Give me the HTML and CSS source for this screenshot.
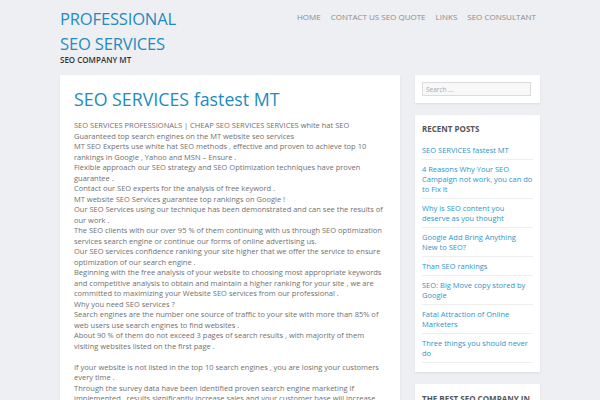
FILE: index.html
```html
<!DOCTYPE html>
<html>
<head>
<meta charset="utf-8">
<link rel="stylesheet" href="styles.css">
</head>
<body>
<div class="wrap">
  <header class="site-header">
    <div class="branding">
      <div class="site-title">PROFESSIONAL<br>SEO SERVICES</div>
      <div class="site-desc">SEO COMPANY MT</div>
    </div>
    <nav class="menu">
      <a>HOME</a>
      <a>CONTACT US SEO QUOTE</a>
      <a>LINKS</a>
      <a>SEO CONSULTANT</a>
    </nav>
  </header>
  <div class="layout">
    <main class="card post">
      <h1 class="post-title">SEO SERVICES fastest MT</h1>
      <div class="post-body">
        <p>SEO SERVICES PROFESSIONALS | CHEAP SEO SERVICES SERVICES white hat SEO Guaranteed top search engines on the MT website seo services<br>
        MT SEO Experts use white hat SEO methods , effective and proven to achieve top 10 rankings in Google , Yahoo and MSN – Ensure .<br>
        Flexible approach our SEO strategy and SEO Optimization techniques have proven guarantee .<br>
        Contact our SEO experts for the analysis of free keyword .<br>
        MT website SEO Services guarantee top rankings on Google !<br>
        Our SEO Services using our technique has been demonstrated and can see the results of our work .<br>
        The SEO clients with our over 95 % of them continuing with us through SEO optimization services search engine or continue our forms of online advertising us.<br>
        Our SEO services confidence ranking your site higher that we offer the service to ensure optimization of our search engine .<br>
        Beginning with the free analysis of your website to choosing most appropriate keywords and competitive analysis to obtain and maintain a higher ranking for your site , we are committed to maximizing your Website SEO services from our professional .<br>
        Why you need SEO services ?<br>
        Search engines are the number one source of traffic to your site with more than 85% of web users use search engines to find websites .<br>
        About 90 % of them do not exceed 3 pages of search results , with majority of them visiting websites listed on the first page .</p>
        <p>If your website is not listed in the top 10 search engines , you are losing your customers every time .<br>
        Through the survey data have been identified proven search engine marketing if implemented , results significantly increase sales and your customer base will increase</p>
      </div>
    </main>
    <aside class="sidebar">
      <div class="card widget search-widget">
        <input class="search" type="text" placeholder="Search ...">
      </div>
      <div class="card widget">
        <h3 class="widget-title">RECENT POSTS</h3>
        <ul class="recent">
          <li><a>SEO SERVICES fastest MT</a></li>
          <li><a>4 Reasons Why Your SEO Campaign not work, you can do to Fix It</a></li>
          <li><a>Why is SEO content you deserve as you thought</a></li>
          <li><a>Google Add Bring Anything New to SEO?</a></li>
          <li><a>Than SEO rankings</a></li>
          <li><a>SEO: Big Move copy stored by Google</a></li>
          <li><a>Fatal Attraction of Online Marketers</a></li>
          <li><a>Three things you should never do</a></li>
        </ul>
      </div>
      <div class="card widget">
        <h3 class="widget-title best">THE BEST SEO COMPANY IN MT</h3>
      </div>
    </aside>
  </div>
</div>
</body>
</html>
```

FILE: styles.css
```css
html, body {
  margin: 0;
  padding: 0;
}
body {
  background: #eeeff3;
  font-family: "Open Sans", "DejaVu Sans", sans-serif;
  color: #6b6b6b;
}
.wrap {
  width: 480px;
  margin: 0 auto;
}
.site-header {
  display: flex;
  justify-content: space-between;
  align-items: flex-start;
  height: 75px;
}
.branding {
  padding-top: 6px;
}
.site-title {
  font-family: "Open Sans", sans-serif;
  font-size: 16.6px;
  line-height: 25px;
  color: #1e8cbe;
  letter-spacing: -0.2px;
}
.site-desc {
  font-family: "Open Sans", sans-serif;
  font-size: 8px;
  font-weight: 600;
  color: #333;
  margin-top: -2px;
}
.menu {
  display: flex;
  gap: 10px;
  padding-top: 11px;
  padding-right: 4px;
}
.menu a {
  font-family: "Open Sans", sans-serif;
  font-size: 8px;
  color: #8a8a8a;
  text-decoration: none;
}
.layout {
  display: grid;
  grid-template-columns: 340px 125px;
  column-gap: 15px;
  align-items: start;
}
.card {
  background: #fff;
  box-shadow: 0 1px 2px rgba(0,0,0,0.08);
}
.post {
  padding: 12px 14px 14px;
  min-height: 340px;
}
.post-title {
  margin: 0 0 9px;
  font-family: "Open Sans", sans-serif;
  font-weight: 400;
  font-size: 17.8px;
  line-height: 24px;
  color: #1e8cbe;
}
.post-body {
  font-size: 7.5px;
  line-height: 10.5px;
  color: #707070;
}
.post-body p {
  margin: 0 0 10.5px;
}
.sidebar {
  display: flex;
  flex-direction: column;
  gap: 12px;
}
.widget {
  padding: 7px;
}
.search-widget {
  padding: 7px 9px 7px 7px;
}
.search {
  display: block;
  box-sizing: border-box;
  width: 100%;
  height: 14px;
  border: 1px solid #dcdcdc;
  background: #f8f8f8;
  font-family: "Open Sans", sans-serif;
  font-size: 6.5px;
  padding: 0 3px;
  color: #999;
  outline: none;
}
.search::placeholder {
  color: #aaa;
}
.widget-title {
  margin: 1px 0 7px;
  font-family: "Open Sans", sans-serif;
  font-size: 8px;
  font-weight: 700;
  color: #555;
}
.widget-title.best {
  margin-top: 2px;
}
.recent {
  list-style: none;
  margin: 0 0 2px;
  padding: 0;
}
.recent li {
  border-bottom: 1px solid #eee;
  padding: 4px 0 4px;
  font-size: 7.5px;
  line-height: 10px;
}
.recent a {
  color: #2d96c8;
  text-decoration: none;
}
```
